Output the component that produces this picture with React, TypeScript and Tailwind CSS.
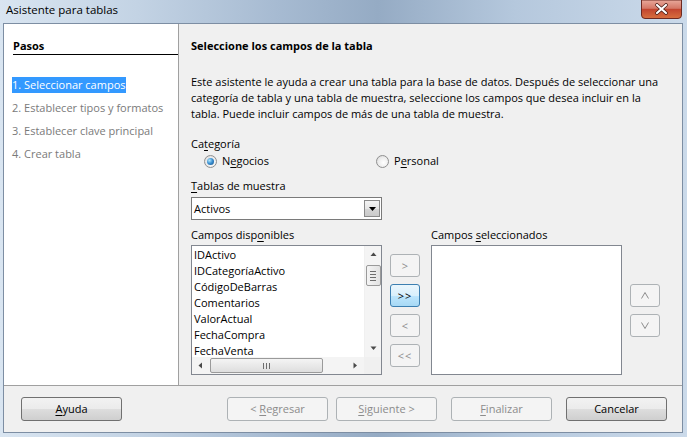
import React from "react";

const FONT = "font-['Open_Sans',sans-serif]";

function U({ children }: { children: React.ReactNode }) {
  return <span className="underline decoration-[1px] underline-offset-[2px]">{children}</span>;
}

const btnNormal =
  "border border-[#707070] rounded-[3px] bg-[linear-gradient(#f2f2f2_0%,#ebebeb_50%,#dddddd_51%,#cfcfcf_100%)] text-black";
const btnDisabled = "border border-[#adb2b5] rounded-[3px] bg-[#f4f4f4] text-[#8c8c8c]";
const btnHot =
  "border border-[#3c7fb1] rounded-[3px] bg-[linear-gradient(#eaf6fd_0%,#d9f0fc_50%,#bee6fd_51%,#a7d9f5_100%)] text-black";

function Radio({ checked }: { checked?: boolean }) {
  return (
    <span className="w-[13px] h-[13px] rounded-full border border-[#8f8f8f] bg-[radial-gradient(circle_at_60%_60%,#ffffff_0%,#ececec_55%,#d0d0d0_100%)] flex items-center justify-center shrink-0">
      {checked && (
        <span className="w-[7px] h-[7px] rounded-full bg-[radial-gradient(circle_at_35%_35%,#b4e8fa_0%,#3f93d4_45%,#0f4a82_100%)]" />
      )}
    </span>
  );
}

function Tri({ dir }: { dir: "up" | "down" | "left" | "right" }) {
  const pts =
    dir === "up"
      ? "0.5,4 3.5,0.5 6.5,4"
      : dir === "down"
      ? "0.5,0.5 3.5,4 6.5,0.5"
      : dir === "left"
      ? "4,0.5 0.5,3.5 4,6.5"
      : "0.5,0.5 4,3.5 0.5,6.5";
  const w = dir === "up" || dir === "down" ? 7 : 5;
  const h = dir === "up" || dir === "down" ? 5 : 7;
  return (
    <svg width={w} height={h} viewBox={`0 0 ${w} ${h}`}>
      <polygon points={pts} fill="#4a4a4a" />
    </svg>
  );
}

export default function App() {
  const items = [
    "IDActivo",
    "IDCategoríaActivo",
    "CódigoDeBarras",
    "Comentarios",
    "ValorActual",
    "FechaCompra",
    "FechaVenta",
  ];
  return (
    <div
      className={`${FONT} w-[687px] h-[437px] overflow-hidden relative bg-[linear-gradient(90deg,#d9e5f1_0%,#c3d3e4_20%,#a7bbd2_40%,#95abc4_55%,#b5c8dd_75%,#cbdaea_100%)] text-[11px] leading-[16px] text-black`}
    >
      {/* Title bar */}
      <div className="h-[23px] flex items-start pl-[6px] pt-[2px]">
        <span className="text-[11.5px] text-black">Asistente para tablas</span>
      </div>
      <div className="absolute left-[641px] top-0 w-[41px] h-[19px]">
        <svg width="41" height="19" viewBox="0 0 41 19">
          <defs>
            <linearGradient id="cg" x1="0" y1="0" x2="0" y2="1">
              <stop offset="0" stopColor="#e9a99b" />
              <stop offset="0.45" stopColor="#d47766" />
              <stop offset="0.5" stopColor="#c2452f" />
              <stop offset="1" stopColor="#d8703f" />
            </linearGradient>
          </defs>
          <path d="M0.5,0 L40.5,0 L40.5,15 Q40.5,18.5 37,18.5 L4,18.5 Q0.5,18.5 0.5,15 Z" fill="url(#cg)" stroke="#6d2a22" />
          <path d="M16,5 L25,13 M25,5 L16,13" stroke="#3f1710" strokeWidth="3.6" strokeLinecap="round" />
          <path d="M16,5 L25,13 M25,5 L16,13" stroke="#ffffff" strokeWidth="2.2" strokeLinecap="round" />
        </svg>
      </div>

      {/* Client area */}
      <div className="ml-[3px] w-[680px] h-[410px] border border-[#7d8ea3] bg-[#f0f0f0] flex flex-col">
        <div className="h-[361px] flex">
          {/* Left panel */}
          <div className="w-[175px] bg-white border-r border-[#a0a0a0] pl-[8px] pt-[14px] flex flex-col">
            <div className="font-bold leading-[16px] pl-[1px]">Pasos</div>
            <div className="h-[1px] bg-black mt-[0px] ml-[1px]" />
            <div className="mt-[22px] flex flex-col gap-[7px]">
              <div className="self-start bg-[#3399ff] text-white px-[0px] h-[16px]">1. Seleccionar campos</div>
              <div className="text-[#7a7a7a] h-[16px]">2. Establecer tipos y formatos</div>
              <div className="text-[#7a7a7a] h-[16px]">3. Establecer clave principal</div>
              <div className="text-[#7a7a7a] h-[16px]">4. Crear tabla</div>
            </div>
          </div>

          {/* Right panel */}
          <div className="flex-1 pl-[12px] pt-[14px] flex flex-col">
            <div className="font-bold">Seleccione los campos de la tabla</div>
            <p className="mt-[20px] w-[480px]">
              Este asistente le ayuda a crear una tabla para la base de datos. Después de seleccionar una categoría de tabla y una tabla de muestra, seleccione los campos que desea incluir en la tabla. Puede incluir campos de más de una tabla de muestra.
            </p>
            <div className="mt-[14px]">
              Ca<U>t</U>egoría
            </div>
            <div className="mt-[1px] h-[16px] flex items-center">
              <div className="flex items-center ml-[13px] w-[172px]">
                <Radio checked />
                <span className="ml-[5px]">
                  N<U>e</U>gocios
                </span>
              </div>
              <div className="flex items-center">
                <Radio />
                <span className="ml-[5px]">
                  P<U>e</U>rsonal
                </span>
              </div>
            </div>
            <div className="mt-[9px]">
              <U>T</U>ablas de muestra
            </div>
            <div className="mt-[3px] w-[191px] h-[23px] border border-[#7a7a7a] bg-white flex items-center pl-[2px] pr-[1px]">
              <span className="flex-1">Activos</span>
              <span className="w-[16px] h-[17px] border border-[#8a8a8a] bg-[linear-gradient(#f4f4f4_0%,#e6e6e6_50%,#d6d6d6_51%,#cacaca_100%)] flex items-center justify-center">
                <svg width="7" height="4" viewBox="0 0 7 4">
                  <polygon points="0,0 7,0 3.5,4" fill="#000" />
                </svg>
              </span>
            </div>

            {/* Lists row */}
            <div className="mt-[7px] flex items-start">
              <div className="w-[191px] flex flex-col">
                <div className="h-[18px]">
                  Campos disp<U>o</U>nibles
                </div>
                <div className="h-[130px] border border-[#828790] bg-white flex flex-col">
                  <div className="flex h-[111px]">
                    <div className="flex-1 overflow-hidden pl-[2px] pt-[1px]">
                      {items.map((t) => (
                        <div key={t} className="h-[16px] whitespace-nowrap">
                          {t}
                        </div>
                      ))}
                    </div>
                    <div className="w-[17px] bg-[#f4f4f4] border-l border-[#f0f0f0] flex flex-col items-center">
                      <div className="h-[17px] flex items-center justify-center">
                        <Tri dir="up" />
                      </div>
                      <div className="w-[15px] h-[21px] mt-[2px] rounded-[2px] border border-[#9a9a9a] bg-[linear-gradient(90deg,#f4f4f4,#e2e2e2)] flex flex-col items-center justify-center gap-[2px]">
                        <span className="w-[6px] h-[1px] bg-[#6d6d6d]" />
                        <span className="w-[6px] h-[1px] bg-[#6d6d6d]" />
                        <span className="w-[6px] h-[1px] bg-[#6d6d6d]" />
                        <span className="w-[6px] h-[1px] bg-[#6d6d6d]" />
                      </div>
                      <div className="flex-1" />
                      <div className="h-[17px] flex items-center justify-center">
                        <Tri dir="down" />
                      </div>
                    </div>
                  </div>
                  <div className="flex h-[17px]">
                    <div className="flex-1 bg-[#f4f4f4] flex items-center">
                      <div className="w-[17px] flex items-center justify-center">
                        <Tri dir="left" />
                      </div>
                      <div className="w-[113px] h-[15px] ml-[1px] rounded-[2px] border border-[#9a9a9a] bg-[linear-gradient(#f4f4f4,#dedede)] flex items-center justify-center gap-[2px]">
                        <span className="w-[1px] h-[6px] bg-[#6d6d6d]" />
                        <span className="w-[1px] h-[6px] bg-[#6d6d6d]" />
                        <span className="w-[1px] h-[6px] bg-[#6d6d6d]" />
                      </div>
                      <div className="flex-1" />
                      <div className="w-[17px] flex items-center justify-center">
                        <Tri dir="right" />
                      </div>
                    </div>
                    <div className="w-[17px] bg-[#f0f0f0]" />
                  </div>
                </div>
              </div>

              <div className="ml-[8px] pt-[27px] flex flex-col gap-[7px]">
                <div className={`${btnDisabled} w-[30px] h-[23px] flex items-center justify-center`}>&gt;</div>
                <div className={`${btnHot} w-[30px] h-[23px] flex items-center justify-center tracking-[1px]`}>&gt;&gt;</div>
                <div className={`${btnDisabled} w-[30px] h-[23px] flex items-center justify-center`}>&lt;</div>
                <div className={`${btnDisabled} w-[30px] h-[23px] flex items-center justify-center tracking-[1px]`}>&lt;&lt;</div>
              </div>

              <div className="ml-[11px] w-[191px] flex flex-col">
                <div className="h-[18px]">
                  Campos <U>s</U>eleccionados
                </div>
                <div className="h-[130px] border border-[#828790] bg-white" />
              </div>

              <div className="ml-[8px] pt-[57px] flex flex-col gap-[7px]">
                <div className={`${btnDisabled} w-[30px] h-[23px] flex items-center justify-center`}>
                  <svg width="8" height="7" viewBox="0 0 8 7">
                    <path d="M0.5,6.5 L4,0.5 L7.5,6.5" fill="none" stroke="#8c8c8c" strokeWidth="1" />
                  </svg>
                </div>
                <div className={`${btnDisabled} w-[30px] h-[23px] flex items-center justify-center`}>
                  <svg width="8" height="7" viewBox="0 0 8 7">
                    <path d="M0.5,0.5 L4,6.5 L7.5,0.5" fill="none" stroke="#8c8c8c" strokeWidth="1" />
                  </svg>
                </div>
              </div>
            </div>
          </div>
        </div>

        {/* Bottom bar */}
        <div className="flex-1 border-t border-[#a0a0a0] flex items-center pl-[17px] pr-[15px]">
          <div className={`${btnNormal} w-[101px] h-[24px] flex items-center justify-center`}>
            <span>
              <U>A</U>yuda
            </span>
          </div>
          <div className="flex-1" />
          <div className={`${btnDisabled} w-[101px] h-[24px] flex items-center justify-center`}>
            <span>
              &lt; <U>R</U>egresar
            </span>
          </div>
          <div className={`${btnDisabled} ml-[8px] w-[101px] h-[24px] flex items-center justify-center`}>
            <span>
              <U>S</U>iguiente &gt;
            </span>
          </div>
          <div className={`${btnDisabled} ml-[14px] w-[101px] h-[24px] flex items-center justify-center`}>
            <span>
              <U>F</U>inalizar
            </span>
          </div>
          <div className={`${btnNormal} ml-[14px] w-[101px] h-[24px] flex items-center justify-center`}>
            <span>Cancelar</span>
          </div>
        </div>
      </div>
    </div>
  );
}
